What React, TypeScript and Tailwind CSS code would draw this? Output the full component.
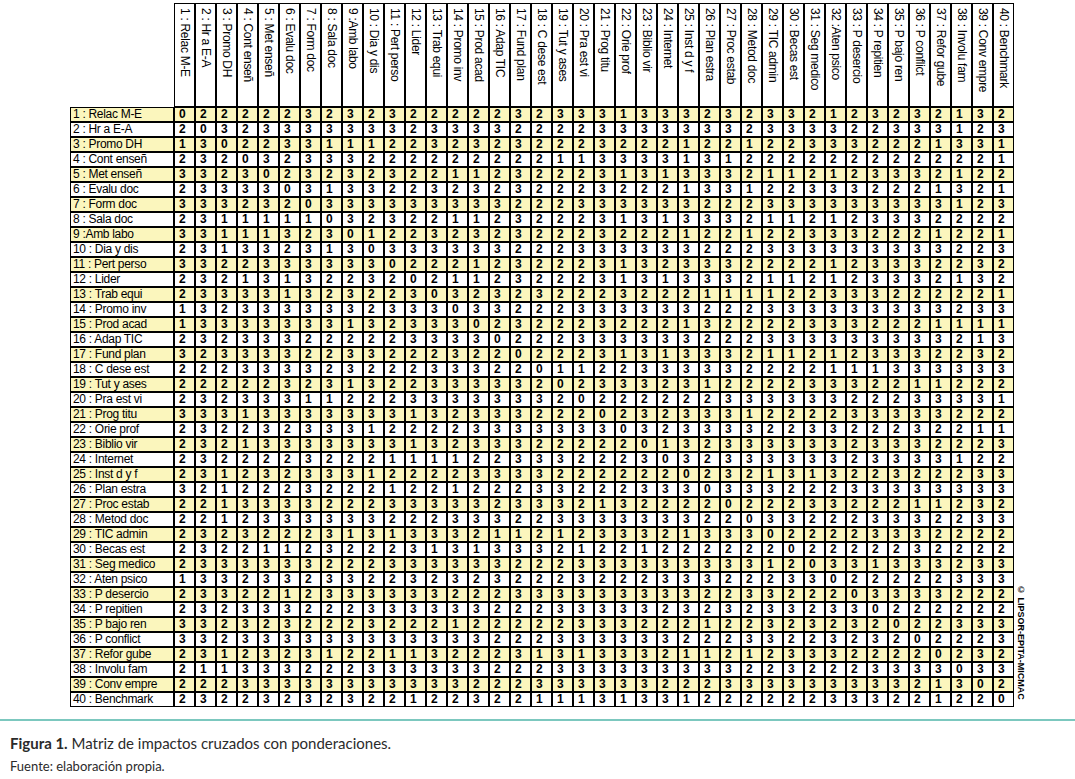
const labels = [
  "1 : Relac M-E",
  "2 : Hr a E-A",
  "3 : Promo DH",
  "4 : Cont enseñ",
  "5 : Met enseñ",
  "6 : Evalu doc",
  "7 : Form doc",
  "8 : Sala doc",
  "9 :Amb labo",
  "10 : Dia y dis",
  "11 : Pert perso",
  "12 : Lider",
  "13 : Trab equi",
  "14 : Promo inv",
  "15 : Prod acad",
  "16 : Adap TIC",
  "17 : Fund plan",
  "18 : C dese est",
  "19 : Tut y ases",
  "20 : Pra est vi",
  "21 : Prog titu",
  "22 : Orie prof",
  "23 : Biblio vir",
  "24 : Internet",
  "25 : Inst d y f",
  "26 : Plan estra",
  "27 : Proc estab",
  "28 : Metod doc",
  "29 : TIC admin",
  "30 : Becas est",
  "31 : Seg medico",
  "32 : Aten psico",
  "33 : P desercio",
  "34 : P repitien",
  "35 : P bajo ren",
  "36 : P conflict",
  "37 : Refor gube",
  "38 : Involu fam",
  "39 : Conv empre",
  "40 : Benchmark",
];

// 40 x 40 influence matrix, rows as groups of ten
const rows = [
  "0222223232 3222223233 3133323233 2123232132",
  "2032333333 3233332222 3333333233 3322333123",
  "1302233111 2232323222 3222122122 3332221331",
  "2320323332 2222222211 3333131222 2222222221",
  "3323023232 3221123222 3131333211 2123332122",
  "2333303133 2232323222 3222133122 3332221321",
  "3332320333 3333332223 3333322233 3333333123",
  "2311111032 3221123222 3131333211 2123332222",
  "3311132301 2232323222 3222122122 3332221221",
  "2313323130 3333332223 3333322233 3333333223",
  "3322333333 0222123222 3132333222 2123332232",
  "2321313223 2021123222 3131333211 2123332132",
  "2333313232 2303232322 2322211112 2333222221",
  "1323333332 3330332223 3333322233 3333333233",
  "1333333313 2333023222 3222132222 3332221111",
  "2323332222 2333302223 3333322233 3333333213",
  "3233332233 2223220222 3131333211 2123332232",
  "2223333232 2233322011 2233333222 2111333333",
  "2222232313 2233333202 3332312222 3332211222",
  "2323331122 2333333320 2222223333 3322233331",
  "3331333333 3132333222 0232333122 2233333222",
  "2322323331 2222333333 3032333322 3322232211",
  "2321333333 3132333222 2201323333 3323332223",
  "2322223222 1111223332 2230323333 3323333122",
  "2312323331 2222333322 2222023213 1322322233",
  "3212223222 1221222332 2233303332 2233333333",
  "2213333222 3333323332 1322220222 3322211232",
  "2212333333 2223332233 3333322033 2223332233",
  "2323222313 1333211212 3332133302 2223332222",
  "2322112322 2313133321 2212222220 2222232222",
  "2333333222 3333332223 3333333312 0331333233",
  "1332332332 2323232223 2223332223 3022222333",
  "2332212333 3332223333 3333322332 2203333222",
  "2323332223 3333322233 3332323233 2330222222",
  "3323232223 2221222223 3322212232 3232022333",
  "3323333333 3333322233 3333222332 2323202223",
  "2312323122 1132223131 3332112123 3322220232",
  "2113332223 3333322233 3333333223 2223333033",
  "2223333333 3333222333 3332223333 3333321302",
  "2322323232 2122322111 3133122222 2333221220",
].map((r) => r.replace(/ /g, "").split(""));

const headers = labels.map((l, i) => (i === 8 ? "9 :Amb labo" : i === 31 ? "32 :Aten psico" : l));

export default function App() {
  return (
    <div className="relative h-[779px] w-[1075px] overflow-hidden bg-white font-['Liberation_Sans',Arial,sans-serif] text-black">
      <div className="flex items-end gap-[2px] pl-[70px] pt-[3px]">
        <div className="grid grid-cols-[104px_repeat(40,21px)]">
          {/* header */}
          <div className="h-[104px]" />
          {headers.map((h, i) => (
            <div key={i} className="flex h-[104px] justify-center border border-black bg-white pt-[4px]">
              <span className="text-[12px] leading-[13px] tracking-[-0.3px] whitespace-nowrap [writing-mode:vertical-rl]">
                {h}
              </span>
            </div>
          ))}

          {/* rows */}
          {rows.map((r, ri) => {
            const bg = ri % 2 === 0 ? "bg-[#fbf6bd]" : "bg-white";
            return [
              <div
                key={`l${ri}`}
                className={`h-[15px] overflow-hidden whitespace-nowrap border border-black pl-[2px] text-[12px] leading-[13px] tracking-[-0.3px] ${bg}`}
              >
                {labels[ri]}
              </div>,
              ...r.map((v, ci) => (
                <div
                  key={`${ri}-${ci}`}
                  className={`h-[15px] border border-black pl-[4px] text-[12px] font-bold leading-[13px] ${bg}`}
                >
                  {v}
                </div>
              )),
            ];
          })}
        </div>
        <div className="mb-[7px] whitespace-nowrap text-[9px] font-bold leading-[10px] [writing-mode:vertical-rl]">
          © LIPSOR-EPITA-MICMAC
        </div>
      </div>

      <div className="mt-[12px] h-[2px] bg-[#7cc8bf]" />

      <div className="pl-[10px] pt-[12px] font-['Lato',sans-serif] text-[#2b2b2b]">
        <p className="text-[15px] leading-[20px]">
          <span className="font-bold">Figura 1.</span> Matriz de impactos cruzados con ponderaciones.
        </p>
        <p className="mt-[4px] text-[13px] leading-[18px]">Fuente: elaboración propia.</p>
      </div>
    </div>
  );
}
